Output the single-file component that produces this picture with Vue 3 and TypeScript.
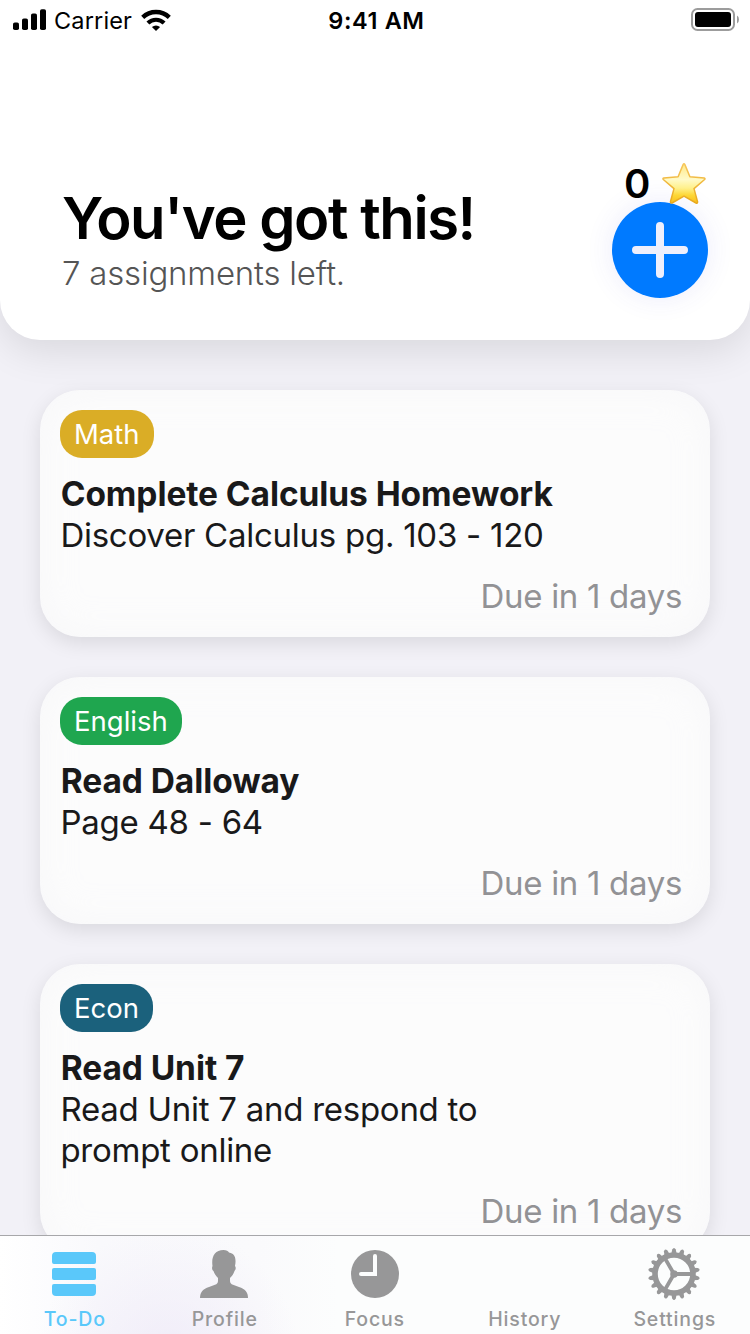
<script setup lang="ts">
interface Assignment {
  subject: string
  color: string
  title: string
  lines: string[]
  due: string
}

const assignments: Assignment[] = [
  { subject: 'Math', color: '#daad26', title: 'Complete Calculus Homework', lines: ['Discover Calculus pg. 103 - 120'], due: 'Due in 1 days' },
  { subject: 'English', color: '#1fa64f', title: 'Read Dalloway', lines: ['Page 48 - 64'], due: 'Due in 1 days' },
  { subject: 'Econ', color: '#1b617c', title: 'Read Unit 7', lines: ['Read Unit 7 and respond to', 'prompt online'], due: 'Due in 1 days' },
]

const tabs: string[] = ['To-Do', 'Profile', 'Focus', 'History', 'Settings']
const teeth: number[] = Array.from({ length: 18 }, (_, i) => i * 20)
</script>

<template>
  <div class="screen">
    <header class="header">
      <div class="status">
        <div class="status-left">
          <svg class="signal" width="34" height="22" viewBox="0 0 34 22">
            <rect x="0" y="13.5" width="6" height="7.5" rx="1.8" />
            <rect x="9" y="9.5" width="6" height="11.5" rx="1.8" />
            <rect x="18" y="4.5" width="6" height="16.5" rx="1.8" />
            <rect x="27" y="0.3" width="6" height="20.7" rx="1.8" />
          </svg>
          <span class="carrier">Carrier</span>
          <svg class="wifi" width="30" height="22" viewBox="0 0 30 22">
            <path d="M15 22 L10.9 18 A6 6 0 0 1 19.1 18 Z" />
            <path d="M6.9 14 A11.7 11.7 0 0 1 23.1 14" fill="none" stroke="#000" stroke-width="4.2" />
            <path d="M1.7 8.3 A19.2 19.2 0 0 1 28.3 8.3" fill="none" stroke="#000" stroke-width="4.4" />
          </svg>
        </div>
        <span class="time">9:41 AM</span>
        <div class="status-right">
          <svg width="49" height="24" viewBox="0 0 49 24">
            <rect x="1" y="1" width="42" height="21" rx="5.5" fill="none" stroke="#9c9c9c" stroke-width="2" />
            <rect x="4" y="4" width="36" height="15" rx="3" fill="#000" />
            <path d="M46 7.5 Q48 8.5 48 11.5 Q48 14.5 46 15.5 Z" fill="#9c9c9c" />
          </svg>
        </div>
      </div>
      <div class="intro">
        <div class="greeting">
          <h1>You've got this!</h1>
          <p>7 assignments left.</p>
        </div>
        <div class="actions">
          <div class="stars">
            <span>0</span>
            <svg width="46" height="44" viewBox="0 0 46 44">
              <defs>
                <linearGradient id="gold" x1="0" y1="0" x2="0" y2="1">
                  <stop offset="0" stop-color="#ffe989" />
                  <stop offset="0.4" stop-color="#fffac8" />
                  <stop offset="0.62" stop-color="#fff08a" />
                  <stop offset="0.8" stop-color="#fdd736" />
                  <stop offset="1" stop-color="#f9be1d" />
                </linearGradient>
                <linearGradient id="rim" x1="0" y1="0" x2="0" y2="1">
                  <stop offset="0" stop-color="#f6c65c" />
                  <stop offset="1" stop-color="#e9a91e" />
                </linearGradient>
              </defs>
              <path d="M22.1 2.6 Q23 1 23.9 2.6 L28.9 14.8 L43.2 16 Q44.6 16.4 43.6 17.5 L33 26.6 L36.6 40 Q36.5 41.6 35 41 L23 34.2 L11 41 Q9.1 41.4 9.5 39.5 L13 26.6 L2.3 17.5 Q1.4 16.3 2.9 16 L17.1 14.8 Z" fill="url(#gold)" stroke="url(#rim)" stroke-width="1.5" stroke-linejoin="round" />
            </svg>
          </div>
          <button class="add" aria-label="Add assignment">
            <svg width="56" height="56" viewBox="0 0 56 56">
              <path d="M28 4 V52 M4 28 H52" stroke="#efeffc" stroke-width="8" stroke-linecap="round" />
            </svg>
          </button>
        </div>
      </div>
    </header>

    <main class="list">
      <article v-for="item in assignments" :key="item.title" class="card">
        <span class="badge" :style="{ background: item.color }">{{ item.subject }}</span>
        <h2>{{ item.title }}</h2>
        <p v-for="line in item.lines" :key="line" class="line">{{ line }}</p>
        <p class="due">{{ item.due }}</p>
      </article>
    </main>

    <nav class="tabbar">
      <div v-for="(tab, i) in tabs" :key="tab" class="tab" :class="{ active: i === 0 }">
        <svg width="56" height="56" viewBox="0 0 56 56" fill="currentColor">
          <g v-if="tab === 'To-Do'">
            <path d="M6 18 V10 Q6 6 10 6 H46 Q50 6 50 10 V16 Q50 18 48 18 H8 Q6 18 6 16 Z" />
            <rect x="6" y="22" width="44" height="12" rx="2" />
            <path d="M8 38 H48 Q50 38 50 40 V46 Q50 50 46 50 H10 Q6 50 6 46 V40 Q6 38 8 38 Z" />
          </g>
          <path v-else-if="tab === 'Profile'" d="M4 52 C4 46 7 43 13 41 L19 38.8 Q22 37.7 22 35 V32 C19.7 29.8 18.2 27.5 17.5 25 C16 24 15.7 21.5 16.5 20 C15.2 11 18.5 4 27.5 4 C30.5 4 32.2 5 33 6.5 C39 7.5 40.5 12.5 39 20 C40.3 21.5 39.7 24 38.5 25 C37.6 28 36 30 34 32 V35 Q34 37.7 37 38.8 L43 41 C49 43 52 46 52 52 Z" />
          <g v-else-if="tab === 'Focus'">
            <circle cx="29" cy="28" r="24" />
            <path d="M29 10 V28 H15" fill="none" stroke="#fcfdfd" stroke-width="4" stroke-linecap="round" />
            <path d="M27 26 H31 V30 H27 Z" fill="#fcfdfd" />
          </g>
          <g v-else-if="tab === 'Settings'" stroke="currentColor">
            <circle cx="28" cy="28" r="19" fill="none" stroke-width="5.6" />
            <path v-for="angle in teeth" :key="angle" d="M25.3 8 L26.2 3.5 Q28 .5 29.8 3.5 L30.7 8 Z" stroke="none" :transform="`rotate(${angle} 28 28)`" />
            <path d="M28 28 H46 M28 28 L19 12.4 M28 28 L19 43.6" stroke-width="3.8" />
            <circle cx="28" cy="28" r="3.8" stroke="none" />
          </g>
        </svg>
        <span>{{ tab }}</span>
      </div>
    </nav>
  </div>
</template>

<style>
body {
  margin: 0;
}
</style>

<style scoped>
.screen {
  width: 750px;
  height: 1334px;
  display: flex;
  flex-direction: column;
  overflow: hidden;
  background: #f2f1f7;
  font-family: Inter, 'Liberation Sans', sans-serif;
  color: #000;
}
h1, h2, p {
  margin: 0;
}
.header {
  position: relative;
  z-index: 1;
  flex: none;
  height: 340px;
  background: #fff;
  border-radius: 0 0 40px 40px;
  box-shadow: 0 10px 40px rgba(0, 0, 0, 0.11);
}
.status {
  display: grid;
  grid-template-columns: 1fr auto 1fr;
  align-items: center;
  height: 40px;
  padding: 0 10px 0 13px;
  font-size: 23.5px;
}
.status-left {
  display: flex;
  align-items: center;
}
.carrier {
  margin-left: 7px;
  letter-spacing: 0.15px;
}
.wifi {
  margin-left: 9px;
}
.time {
  font-weight: 600;
  letter-spacing: 0.6px;
}
.status-right {
  display: flex;
  justify-content: flex-end;
}
.intro {
  display: flex;
  justify-content: space-between;
  padding: 122px 42px 0 62px;
}
.greeting {
  padding-top: 21px;
}
h1 {
  font-size: 58px;
  line-height: 71px;
  font-weight: 600;
  letter-spacing: -1.43px;
  white-space: nowrap;
}
.greeting p {
  margin-top: -1px;
  font-size: 33px;
  line-height: 41px;
  font-weight: 300;
  letter-spacing: -0.2px;
  color: #555;
}
.actions {
  width: 96px;
}
.stars {
  display: flex;
  align-items: center;
  justify-content: space-between;
  height: 40px;
  padding-left: 12px;
  font-size: 40px;
  font-weight: 600;
}
.stars span {
  position: relative;
  top: 1px;
}
.stars svg {
  position: relative;
  z-index: 1;
  top: 2px;
  left: -1px;
}
.add {
  display: flex;
  align-items: center;
  justify-content: center;
  width: 96px;
  height: 96px;
  padding: 0;
  border: 0;
  border-radius: 50%;
  background: #007aff;
  box-shadow: 0 0 28px rgba(70, 70, 220, 0.1);
}
.list {
  flex: none;
  display: flex;
  flex-direction: column;
  gap: 40px;
  height: 895px;
  box-sizing: border-box;
  padding: 50px 40px 0;
  overflow: hidden;
}
.card {
  flex: none;
  display: flex;
  flex-direction: column;
  align-items: flex-start;
  box-sizing: border-box;
  padding: 20px;
  border-radius: 40px;
  background: #fcfcfc;
  box-shadow: 0 6px 20px rgba(0, 0, 0, 0.1), inset 0 0 36px rgba(242, 241, 247, 0.35);
  color: #19191a;
}
.badge {
  height: 48px;
  line-height: 49px;
  padding: 0 14px;
  margin-bottom: 16px;
  border-radius: 22px;
  color: #fff;
  font-size: 27.5px;
}
h2 {
  padding-left: 0.7px;
  font-size: 33.5px;
  line-height: 41px;
  font-weight: 700;
  letter-spacing: -0.08px;
}
.line {
  padding-left: 0.4px;
  font-size: 33px;
  line-height: 41px;
  letter-spacing: -0.26px;
}
.due {
  align-self: flex-end;
  margin: 20px 8px 0 0;
  font-size: 33px;
  line-height: 41px;
  letter-spacing: -0.32px;
  color: #929295;
}
.tabbar {
  position: relative;
  z-index: 2;
  flex: none;
  display: grid;
  grid-template-columns: repeat(5, 150px);
  height: 99px;
  box-sizing: border-box;
  margin-left: -1px;
  width: 751px;
  border-top: 1px solid #a7a7aa;
  background:
    radial-gradient(circle at 170px 120px, rgba(237, 232, 247, 0.75), transparent 130px),
    linear-gradient(90deg, #fff 0, #f9f9fc 100px, #fafafc 260px, #fcfdfd 340px, #fcfdfd 100%);
}
.tab {
  display: flex;
  flex-direction: column;
  align-items: center;
  padding-top: 10px;
  color: #979798;
  font-size: 19.5px;
  font-weight: 500;
}
.tab span {
  line-height: 24px;
  margin-top: 5px;
  padding-left: 1.6px;
  letter-spacing: 0.85px;
}
.tab.active {
  color: #5ac8fa;
}
</style>
